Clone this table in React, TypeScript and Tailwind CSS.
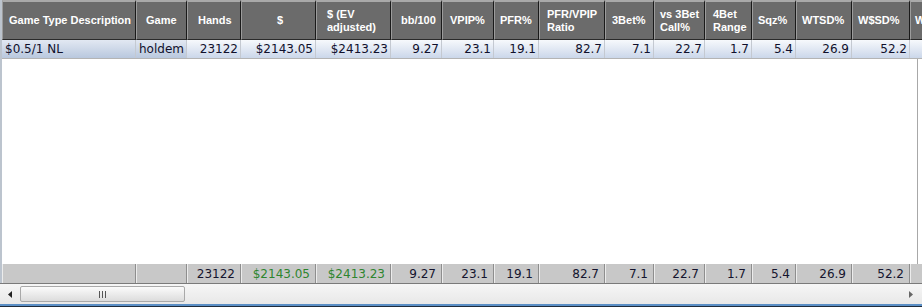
type Column = {
  key: string;
  label: string[];
  width: string;
  headPad: string;
  value: string;
  total: string;
  left?: boolean;
  selected?: boolean;
  green?: boolean;
};

const columns: Column[] = [
  { key: "desc", label: ["Game Type Description"], width: "w-[134px]", headPad: "pl-[6px]", value: "$0.5/1 NL", total: "", left: true, selected: true },
  { key: "game", label: ["Game"], width: "w-[51px]", headPad: "pl-[9px]", value: "holdem", total: "", left: true, selected: true },
  { key: "hands", label: ["Hands"], width: "w-[54px]", headPad: "pl-[10px]", value: "23122", total: "23122" },
  { key: "won", label: ["$"], width: "w-[75px]", headPad: "pl-[35px]", value: "$2143.05", total: "$2143.05", green: true },
  { key: "ev", label: ["$ (EV", "adjusted)"], width: "w-[75px]", headPad: "pl-[10px]", value: "$2413.23", total: "$2413.23", green: true },
  { key: "bb", label: ["bb/100"], width: "w-[51px]", headPad: "pl-[9px]", value: "9.27", total: "9.27" },
  { key: "vpip", label: ["VPIP%"], width: "w-[52px]", headPad: "pl-[7px]", value: "23.1", total: "23.1" },
  { key: "pfr", label: ["PFR%"], width: "w-[45px]", headPad: "pl-[5px]", value: "19.1", total: "19.1" },
  { key: "ratio", label: ["PFR/VPIP", "Ratio"], width: "w-[66px]", headPad: "pl-[7px]", value: "82.7", total: "82.7" },
  { key: "3bet", label: ["3Bet%"], width: "w-[49px]", headPad: "pl-[6px]", value: "7.1", total: "7.1" },
  { key: "vs3", label: ["vs 3Bet", "Call%"], width: "w-[51px]", headPad: "pl-[5px]", value: "22.7", total: "22.7" },
  { key: "4bet", label: ["4Bet", "Range"], width: "w-[47px]", headPad: "pl-[7px]", value: "1.7", total: "1.7" },
  { key: "sqz", label: ["Sqz%"], width: "w-[44px]", headPad: "pl-[5px]", value: "5.4", total: "5.4" },
  { key: "wtsd", label: ["WTSD%"], width: "w-[56px]", headPad: "pl-[5px]", value: "26.9", total: "26.9" },
  { key: "wsd", label: ["W$SD%"], width: "w-[58px]", headPad: "pl-[5px]", value: "52.2", total: "52.2" },
  { key: "wwsf", label: ["W$WSF%"], width: "w-[40px]", headPad: "pl-[4px]", value: "", total: "" },
];

export default function App() {
  return (
    <div className="flex h-[307px] w-[922px] flex-col overflow-hidden bg-white font-['DejaVu_Sans',Verdana,sans-serif] text-[12px] text-[#10102c]">
      <div className="flex min-h-0 flex-1">
        <div className="w-[2px] shrink-0 bg-[#bcc4ce]" />
        <div className="flex min-w-0 flex-1 flex-col">
          {/* header */}
          <div className="flex h-[40px] shrink-0 overflow-hidden">
            {columns.map((col) => (
              <div
                key={col.key}
                className={`${col.width} ${col.headPad} flex shrink-0 flex-col justify-center border-t-2 border-r border-b border-l border-t-[#a9a9a9] border-r-[#1a1a1a] border-b-[#2a2a2a] border-l-[#9c9c9c] bg-[#6b6b6b] font-['Liberation_Sans',Arial,sans-serif] text-[11px] leading-[13px] font-bold whitespace-nowrap text-white`}
              >
                {col.label.map((line) => (
                  <span key={line}>{line}</span>
                ))}
              </div>
            ))}
          </div>

          {/* data row */}
          <div className="flex h-[18px] shrink-0 overflow-hidden">
            {columns.map((col) => (
              <div
                key={col.key}
                className={`${col.width} flex shrink-0 items-center border-r border-r-[#c4c9d1] bg-gradient-to-b leading-none whitespace-nowrap ${
                  col.selected ? "from-[#e2e8f2] to-[#b9c8de]" : "from-[#f7f9fc] to-[#cbd7ea]"
                } ${col.left ? "justify-start pl-[3px]" : "justify-end pr-[2px]"}`}
              >
                {col.value}
              </div>
            ))}
          </div>
          <div className="h-[1px] shrink-0 bg-[#b4b4b4]" />

          {/* empty area */}
          <div className="flex min-h-0 flex-1">
            <div className="flex-1 bg-white" />
            <div className="w-[1px] bg-[#a8a8a8]" />
            <div className="w-[4px] bg-white" />
          </div>

          {/* totals */}
          <div className="flex h-[19px] shrink-0 overflow-hidden bg-[#c8c8c8]">
            {columns.map((col) => (
              <div
                key={col.key}
                className={`${col.width} flex shrink-0 items-center justify-end border-r border-l border-r-[#8e8e8e] border-l-[#ececec] pr-[5px] leading-none whitespace-nowrap ${
                  col.green ? "text-[#2e852e]" : "text-[#14142e]"
                }`}
              >
                {col.total}
              </div>
            ))}
          </div>
        </div>
      </div>
      <div className="h-[1px] shrink-0 bg-[#7a7a7a]" />

      {/* horizontal scrollbar */}
      <div className="flex h-[20px] shrink-0 items-center bg-gradient-to-b from-[#f6f6f6] to-[#e8e8e8]">
        <div className="flex w-[20px] shrink-0 justify-center">
          <svg width="5" height="7" viewBox="0 0 5 7">
            <path d="M4 0 L0 3.5 L4 7 Z" fill="#222" />
          </svg>
        </div>
        <div className="flex h-[16px] w-[165px] shrink-0 items-center justify-center rounded-[2px] border border-[#a9a9a9] bg-gradient-to-b from-[#fbfbfb] to-[#dcdcdc]">
          <svg width="7" height="7" viewBox="0 0 7 7">
            <rect x="0" y="0" width="1" height="7" fill="#555" />
            <rect x="3" y="0" width="1" height="7" fill="#555" />
            <rect x="6" y="0" width="1" height="7" fill="#555" />
          </svg>
        </div>
        <div className="flex-1" />
        <div className="flex w-[24px] shrink-0 justify-center">
          <svg width="5" height="7" viewBox="0 0 5 7">
            <path d="M1 0 L5 3.5 L1 7 Z" fill="#666" />
          </svg>
        </div>
      </div>
      <div className="h-[2px] shrink-0 bg-[#5b8fc6]" />
      <div className="h-[1px] shrink-0 bg-[#1e2c3c]" />
    </div>
  );
}
